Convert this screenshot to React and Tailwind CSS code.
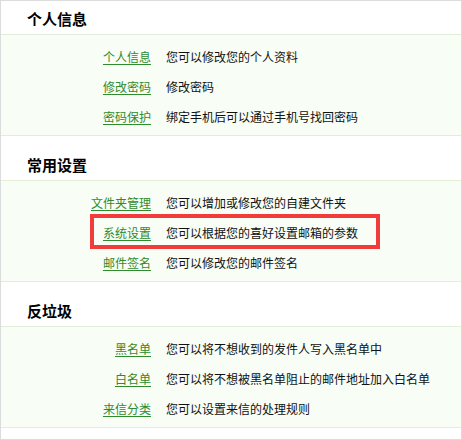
const sections = [
  {
    title: '个人信息',
    mt: '',
    rows: [
      ['个人信息', '您可以修改您的个人资料'],
      ['修改密码', '修改密码'],
      ['密码保护', '绑定手机后可以通过手机号找回密码'],
    ],
  },
  {
    title: '常用设置',
    mt: 'mt-[11px]',
    highlight: 1,
    rows: [
      ['文件夹管理', '您可以增加或修改您的自建文件夹'],
      ['系统设置', '您可以根据您的喜好设置邮箱的参数'],
      ['邮件签名', '您可以修改您的邮件签名'],
    ],
  },
  {
    title: '反垃圾',
    mt: 'mt-[11px]',
    rows: [
      ['黑名单', '您可以将不想收到的发件人写入黑名单中'],
      ['白名单', '您可以将不想被黑名单阻止的邮件地址加入白名单'],
      ['来信分类', '您可以设置来信的处理规则'],
    ],
  },
];

function Section({ s }) {
  return (
    <div className={s.mt}>
      <div className="h-[33px] pl-[26px] pt-[3px] flex items-center text-[15px] font-bold text-black">
        {s.title}
      </div>
      <div className="relative border-y border-[#e3eed9] bg-[#f8fdf5] pt-[7px] pb-[3px]">
        {s.rows.map(([link, desc], i) => (
          <div key={i} className="h-[30px] flex items-center text-[12px]">
            <div className="w-[150px] text-right">
              <a href="#" className="text-[#2e8b2e] underline underline-offset-2">{link}</a>
            </div>
            <div className="pl-[15px] text-[#111]">{desc}</div>
          </div>
        ))}
        {s.highlight !== undefined && (
          <div className="absolute left-[89px] top-[33px] w-[290px] h-[35px] border-4 border-[#f23c3c]" />
        )}
      </div>
    </div>
  );
}

export default function App() {
  return (
    <div
      className="w-[462px] h-[440px] border border-[#dcdcdc] bg-white"
      style={{ fontFamily: '"Microsoft YaHei", "Noto Sans CJK SC", sans-serif' }}
    >
      {sections.map((s, i) => (
        <Section key={i} s={s} />
      ))}
    </div>
  );
}
